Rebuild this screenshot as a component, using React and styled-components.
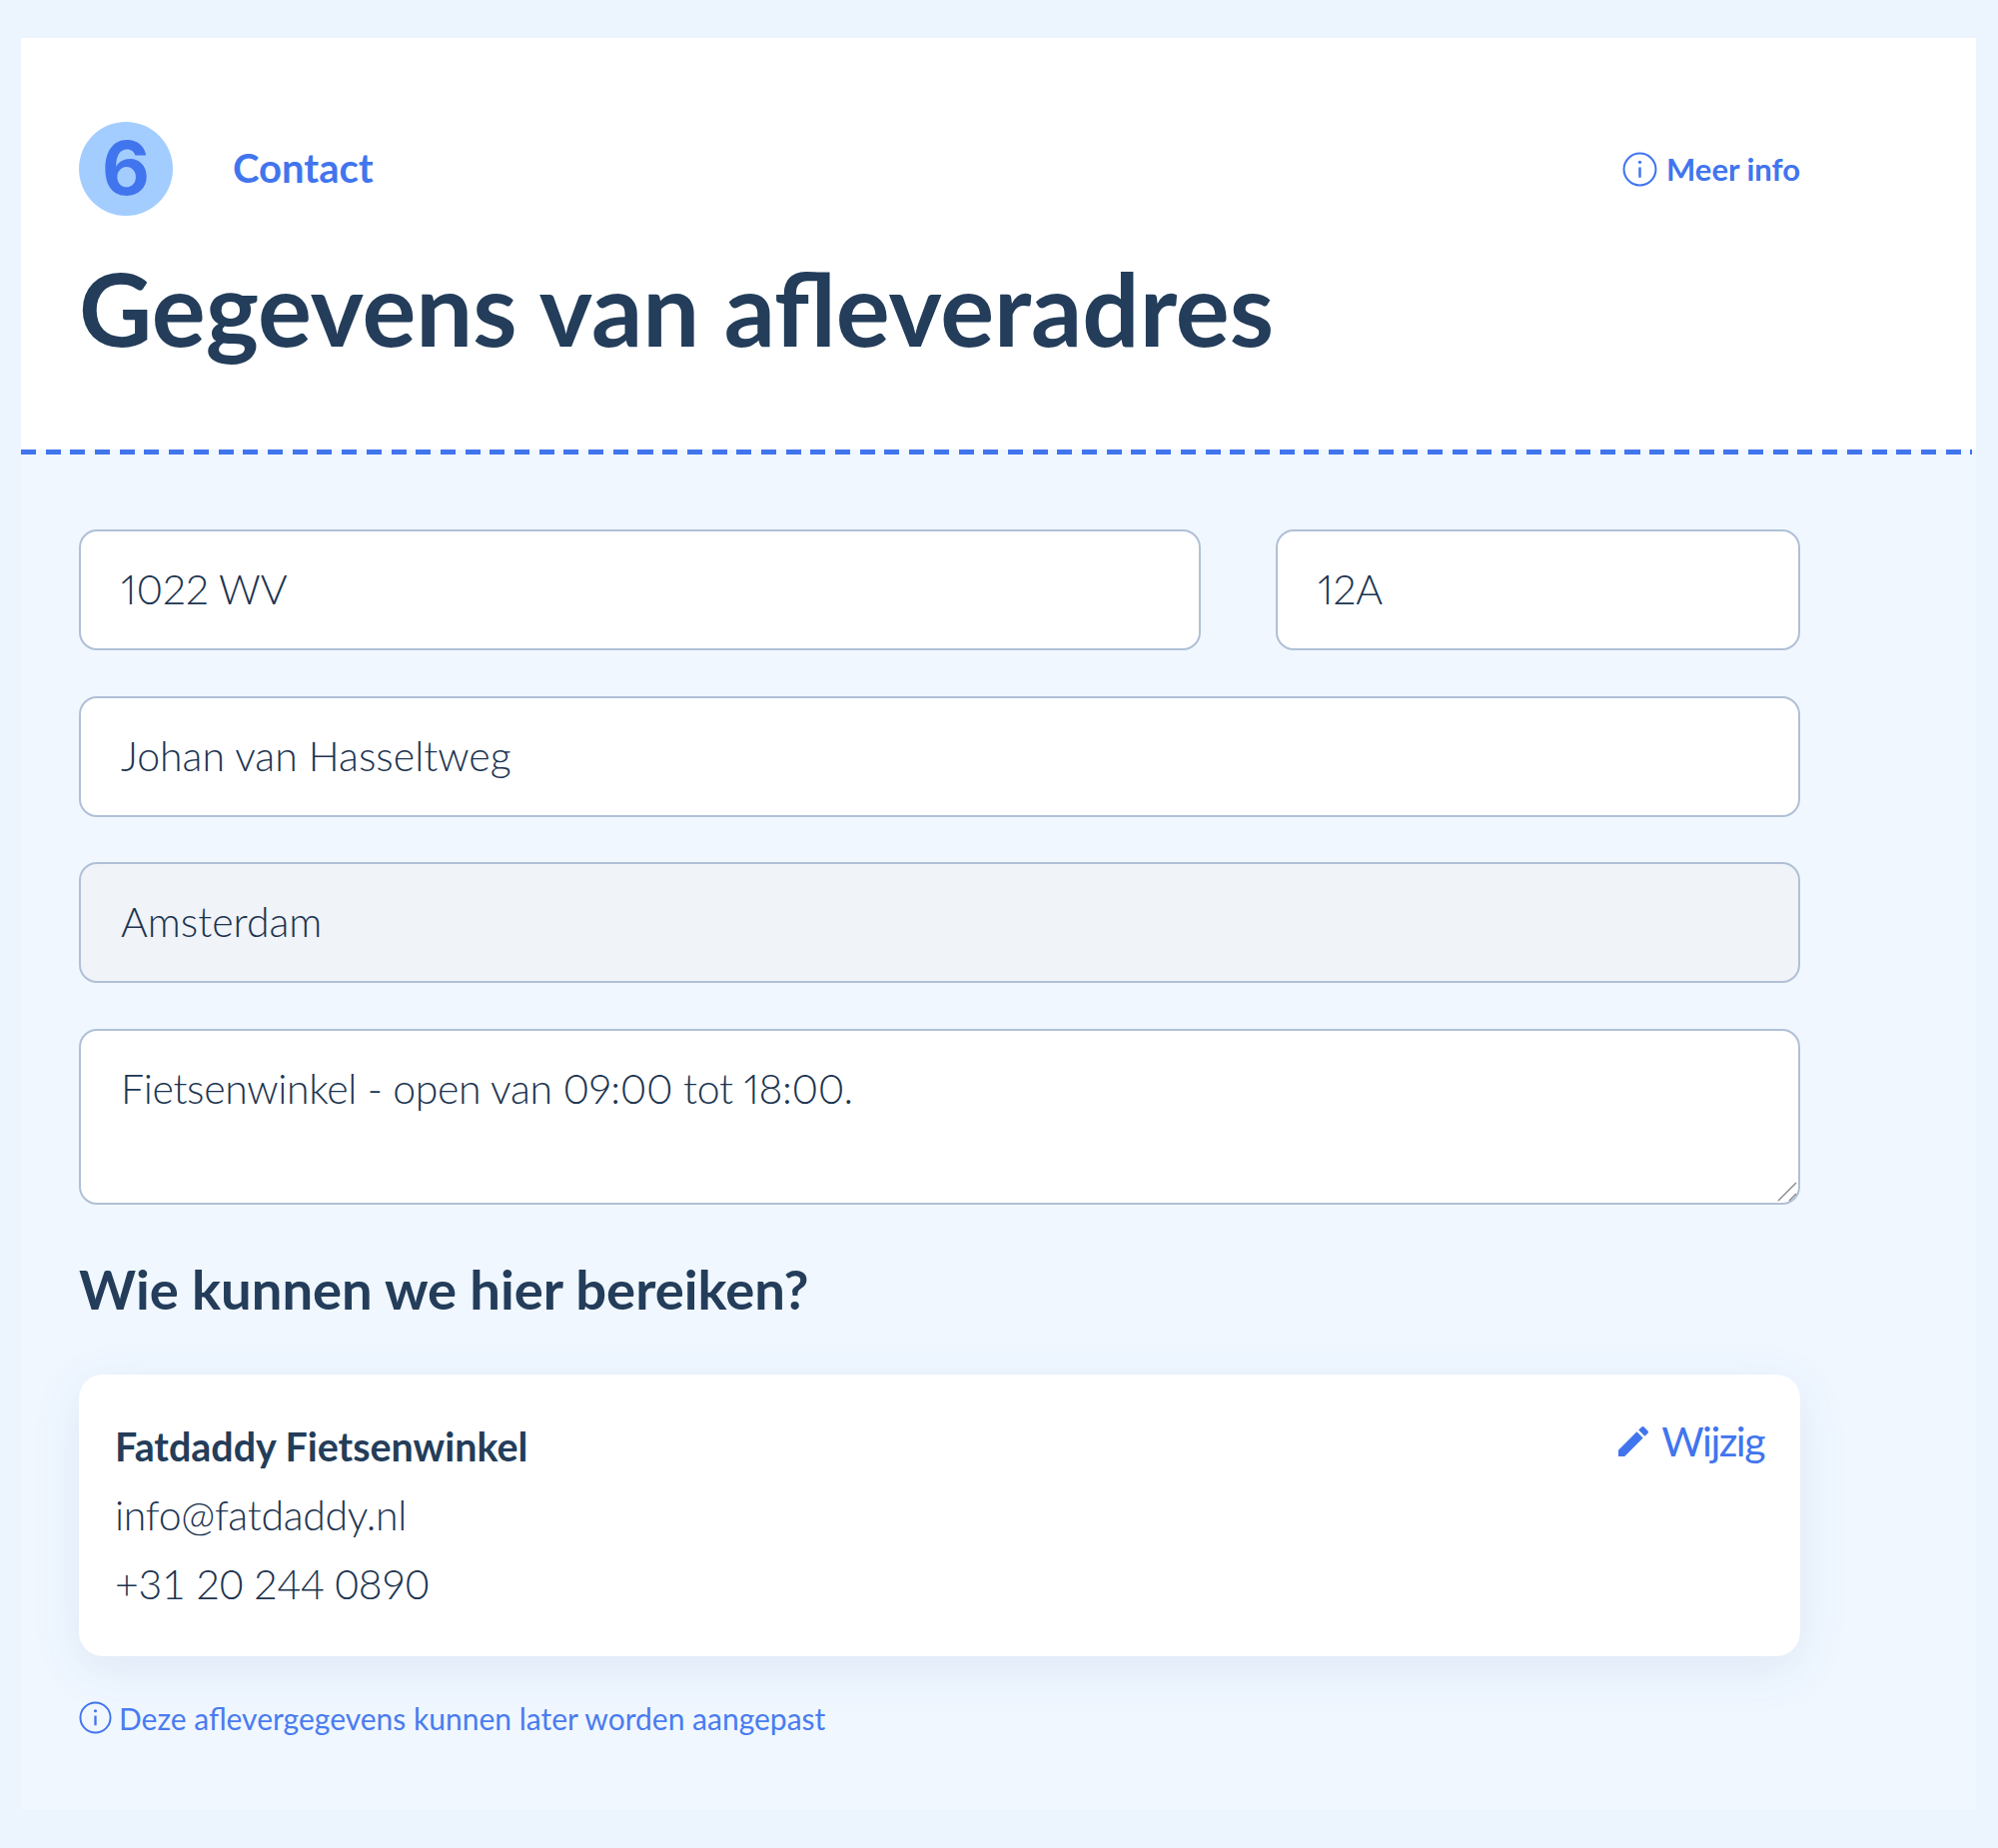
import React from "react";
import styled, { createGlobalStyle } from "styled-components";

const Global = createGlobalStyle`
  html, body { margin: 0; padding: 0; background: #ecf4fd; }
  * { box-sizing: border-box; }
  body { font-family: Lato, "Open Sans", sans-serif; color: #233d5a; }
`;

const Page = styled.div`
  width: 2000px;
  height: 1850px;
  padding: 38px 22px 39px 21px;
`;
const Card = styled.section`
  height: 100%;
  display: flex;
  flex-direction: column;
  background: #f0f7ff;
`;
const Header = styled.header`
  height: 412px;
  flex: none;
  background: #fff;
  padding: 84px 176px 0 58px;
`;
const StepRow = styled.div`
  display: flex;
  align-items: center;
  gap: 60px;
`;
const StepBadge = styled.div`
  width: 94px;
  height: 94px;
  flex: none;
  border-radius: 50%;
  background: #a3cdff;
  color: #4175ee;
  font-family: Inter, sans-serif;
  font-size: 74px;
  font-weight: 700;
  line-height: 92px;
  text-align: center;
`;
const StepLabel = styled.div`
  flex: 1;
  margin-top: -3px;
  color: #4175ee;
  font-size: 40px;
  font-weight: 700;
`;
const InfoLink = styled.a`
  display: flex;
  align-items: center;
  gap: 9px;
  color: #4175ee;
  font-size: 31px;
  font-weight: 700;
`;
const Title = styled.h1`
  margin: 32px 0 0;
  font-size: 101px;
  line-height: 120px;
  font-weight: 700;
  color: #233d5a;
`;
const Dashes = styled.div`
  height: 5px;
  flex: none;
  margin-right: 4px;
  background: repeating-linear-gradient(90deg, #4175ee 0 15px, transparent 15px 24.7px);
`;
const Body = styled.div`
  flex: 1;
  padding: 75px 176px 0 58px;
  display: flex;
  flex-direction: column;
`;
const FieldRow = styled.div`
  display: flex;
  gap: 75px;
  margin-bottom: 45.5px;
`;
const Input = styled.input`
  display: block;
  height: 121px;
  min-width: 0;
  flex: ${(p) => p.$grow};
  width: ${(p) => (p.$width ? `${p.$width}px` : "auto")};
  border: 2px solid #b0c0d6;
  border-radius: 18px;
  padding: 0 40px 2px;
  background: ${(p) => (p.disabled ? "#f0f3f8" : "#fff")};
  color: #1c3450;
  font: 300 41px Lato, sans-serif;
  font-variant-numeric: proportional-nums;
  opacity: 1;
  -webkit-text-fill-color: #1c3450;
  outline: none;
`;
const AreaWrap = styled.div`
  position: relative;
  flex: none;
  height: 176px;
`;
const Area = styled.textarea`
  display: block;
  width: 100%;
  height: 100%;
  resize: none;
  border: 2px solid #b0c0d6;
  border-radius: 18px;
  padding: 33px 40px;
  background: #fff;
  color: #1c3450;
  font: 300 41px/1.2 Lato, sans-serif;
  font-variant-numeric: proportional-nums;
  letter-spacing: -0.35px;
  outline: none;
`;
const Grip = styled.svg`
  position: absolute;
  right: 3px;
  bottom: 3px;
  width: 20px;
  height: 20px;
`;
const Subtitle = styled.h2`
  margin: 53px 0 0;
  font-size: 54.4px;
  line-height: 62px;
  font-weight: 700;
  color: #233d5a;
`;
const ContactCard = styled.div`
  position: relative;
  margin-top: 55px;
  height: 282px;
  flex: none;
  border-radius: 24px;
  background: #fff;
  padding: 37px 36px;
  box-shadow: 0 12px 50px rgba(60, 100, 160, 0.1);
  color: #1c3450;
  font-size: 41px;
  font-weight: 300;
  letter-spacing: -0.3px;
  line-height: 69px;
`;
const ContactName = styled.div`
  color: #233d5a;
  font-weight: 700;
  font-size: 39.4px;
  letter-spacing: 0;
`;
const EditLink = styled.a`
  position: absolute;
  top: 37px;
  right: 36px;
  display: flex;
  align-items: center;
  gap: 8px;
  color: #4175ee;
  font-size: 41px;
  font-weight: 400;
  letter-spacing: -1.5px;
  line-height: 60px;
`;
const Note = styled.p`
  margin: 42px 0 0;
  display: flex;
  align-items: center;
  gap: 7px;
  color: #4a7cef;
  font-size: 30px;
  line-height: 40px;
`;

const InfoIcon = ({ size }) => (
  <svg width={size} height={size} viewBox="0 0 34 34" fill="none" stroke="#4175ee">
    <circle cx="17" cy="17" r="15.5" strokeWidth="2" />
    <path d="M17 15v10" strokeWidth="2.4" />
    <circle cx="17" cy="10" r="1.6" fill="#4175ee" stroke="none" />
  </svg>
);
const Pencil = () => (
  <svg width="40" height="40" viewBox="0 0 24 24" fill="#4175ee">
    <path d="M3 17.25V21h3.75L17.81 9.94l-3.75-3.75L3 17.25zM20.71 7.04a1 1 0 0 0 0-1.41l-2.34-2.34a1 1 0 0 0-1.41 0l-1.83 1.83 3.75 3.75 1.83-1.83z" />
  </svg>
);

export default function App() {
  return (
    <Page>
      <Global />
      <Card>
        <Header>
          <StepRow>
            <StepBadge>6</StepBadge>
            <StepLabel>Contact</StepLabel>
            <InfoLink><InfoIcon size={35} />Meer info</InfoLink>
          </StepRow>
          <Title>Gegevens van afleveradres</Title>
        </Header>
        <Dashes />
        <Body>
          <FieldRow>
            <Input $grow="1" defaultValue="1022 WV" />
            <Input $grow="none" $width={525} defaultValue="12A" />
          </FieldRow>
          <FieldRow><Input $grow="1" defaultValue="Johan van Hasseltweg" /></FieldRow>
          <FieldRow><Input $grow="1" disabled defaultValue="Amsterdam" /></FieldRow>
          <AreaWrap>
            <Area defaultValue="Fietsenwinkel - open van 09:00 tot 18:00." />
            <Grip viewBox="0 0 20 20" fill="none" stroke="#8a8f96" strokeWidth="1.5">
              <path d="M1 19L19 1M12 19l7-7" />
            </Grip>
          </AreaWrap>
          <Subtitle>Wie kunnen we hier bereiken?</Subtitle>
          <ContactCard>
            <ContactName>Fatdaddy Fietsenwinkel</ContactName>
            <div>info@fatdaddy.nl</div>
            <div>+31 20 244 0890</div>
            <EditLink><Pencil />Wijzig</EditLink>
          </ContactCard>
          <Note><InfoIcon size={33} />Deze aflevergegevens kunnen later worden aangepast</Note>
        </Body>
      </Card>
    </Page>
  );
}
